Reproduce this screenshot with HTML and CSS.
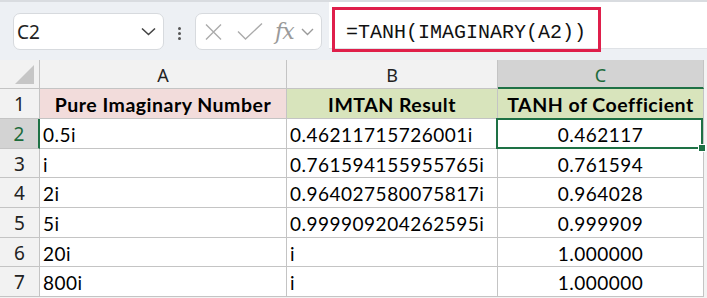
FILE: index.html
```html
<!DOCTYPE html>
<html lang="en">

<head>
  <meta charset="UTF-8">
  <title>TANH of Coefficient</title>
  <link rel="stylesheet" href="styles.css">
</head>

<body>
  <div class="toolbar">
    <div class="namebox">
      <span>C2</span>
      <svg width="15" height="9" viewBox="0 0 15 9"><path d="M1 1.5 L7.5 7.5 L14 1.5" fill="none" stroke="#444" stroke-width="1.6"/></svg>
    </div>
    <div class="grip"><i></i><i></i><i></i></div>
    <div class="fxbox">
      <svg class="ic-x" width="17" height="16" viewBox="0 0 17 16"><path d="M1 0.5 L16 15.5 M16 0.5 L1 15.5" fill="none" stroke="#ababab" stroke-width="1.4"/></svg>
      <svg class="ic-ok" width="26" height="17" viewBox="0 0 26 17"><path d="M1 8.5 L8.5 16 L25 0.5" fill="none" stroke="#ababab" stroke-width="1.4"/></svg>
      <span class="fx">fx</span>
      <svg width="13" height="8" viewBox="0 0 13 8"><path d="M1 1 L6.5 6.5 L12 1" fill="none" stroke="#9a9a9a" stroke-width="1.4"/></svg>
    </div>
    <div class="formula">
      <div class="formula-text">=TANH(IMAGINARY(A2))</div>
    </div>
  </div>

  <div class="sheet">
    <div class="corner"><svg width="20" height="20" viewBox="0 0 20 20"><path d="M19 0 L19 19 L0 19 Z" fill="#c6c6c6"/></svg></div>
    <div class="colhead">A</div>
    <div class="colhead">B</div>
    <div class="colhead active">C</div>

    <div class="rowhead">1</div>
    <div class="cell title pink">Pure Imaginary Number</div>
    <div class="cell title green">IMTAN Result</div>
    <div class="cell title green">TANH of Coefficient</div>

    <div class="rowhead active">2</div>
    <div class="cell">0.5i</div>
    <div class="cell">0.46211715726001i</div>
    <div class="cell num selected">0.462117<span class="sel"><span class="handle"></span></span></div>

    <div class="rowhead">3</div>
    <div class="cell">i</div>
    <div class="cell">0.761594155955765i</div>
    <div class="cell num">0.761594</div>

    <div class="rowhead">4</div>
    <div class="cell">2i</div>
    <div class="cell">0.964027580075817i</div>
    <div class="cell num">0.964028</div>

    <div class="rowhead">5</div>
    <div class="cell">5i</div>
    <div class="cell">0.999909204262595i</div>
    <div class="cell num">0.999909</div>

    <div class="rowhead">6</div>
    <div class="cell">20i</div>
    <div class="cell">i</div>
    <div class="cell num">1.000000</div>

    <div class="rowhead">7</div>
    <div class="cell">800i</div>
    <div class="cell">i</div>
    <div class="cell num">1.000000</div>
  </div>
</body>

</html>
```

FILE: styles.css
```css
body {
  margin: 0;
  width: 707px;
  height: 298px;
  overflow: hidden;
  background: #f3f3f3;
  font-family: "Noto Sans", sans-serif;
}

/* formula bar */
.toolbar {
  height: 58px;
  display: flex;
  align-items: flex-start;
  background: #edf0f4;
  border-top: 2px solid #d9dce0;
}

.namebox {
  box-sizing: border-box;
  width: 151px;
  height: 37px;
  margin: 11px 0 0 13px;
  padding: 0 7px 0 3px;
  display: flex;
  align-items: center;
  justify-content: space-between;
  background: #fff;
  border: 1px solid #d7dade;
  border-radius: 7px;
  font-size: 19px;
  color: #222;
}

.grip {
  margin: 25px 0 0 14px;
  display: flex;
  flex-direction: column;
  gap: 2px;
}

.grip i {
  width: 3px;
  height: 3px;
  border-radius: 50%;
  background: #555;
}

.fxbox {
  box-sizing: border-box;
  width: 127px;
  height: 37px;
  margin: 11px 0 0 14px;
  padding: 0 0 0 9px;
  display: flex;
  align-items: center;
  background: #fff;
  border: 1px solid #d7dade;
  border-radius: 7px;
}

.ic-ok {
  margin-left: 15px;
}

.fx {
  margin: 0 7px 0 12px;
  font-family: "DejaVu Serif", serif;
  font-style: italic;
  font-size: 22px;
  line-height: 22px;
  color: #9a9a9a;
  letter-spacing: -1px;
}

.formula {
  flex: 1;
  height: 47px;
  margin-left: 7px;
  padding: 5px 0 0 3px;
  box-sizing: border-box;
  background: #fff;
  border-bottom: 1px solid #dfe2e6;
}

.formula-text {
  box-sizing: border-box;
  width: 269px;
  height: 45px;
  padding: 6px 0 0 11px;
  border: 3px solid #df1f4b;
  font-family: "Liberation Mono", monospace;
  font-size: 20px;
  line-height: 33px;
  color: #111;
}

/* grid */
.sheet {
  display: grid;
  grid-template-columns: 40px 247px 211px 206px;
  grid-template-rows: 29px 30px 30px 29px 30px 30px 29px 30px;
  background: #fff;
  width: 704px;
}

.sheet > div {
  box-sizing: border-box;
  border-right: 1px solid #c4c4c4;
  border-bottom: 1px solid #c4c4c4;
  white-space: nowrap;
}

.corner {
  background: #f2f2f2;
  display: flex;
  align-items: flex-end;
  justify-content: flex-end;
  padding: 0 4px 3px 0;
}

.colhead {
  background: #f2f2f2;
  text-align: center;
  font-size: 18px;
  line-height: 30px;
  color: #222;
}

.colhead.active {
  background: #d3d3d3;
  color: #1c6b3b;
  border-bottom: 2px solid #1e7145 !important;
}

.rowhead {
  background: #f2f2f2;
  text-align: center;
  font-size: 19px;
  line-height: 30px;
  color: #222;
}

.rowhead.active {
  background: #d3d3d3;
  color: #1c6b3b;
  border-right: 2px solid #1e7145 !important;
}

.cell {
  padding: 2px 0 0 3px;
  font-family: Lato, "Liberation Sans", sans-serif;
  font-size: 19px;
  line-height: 27px;
  letter-spacing: 0.5px;
  color: #000;
}

.cell.title {
  font-size: 19.5px;
  font-weight: bold;
  text-align: center;
  padding-left: 0;
  letter-spacing: 0.5px;
}

.pink {
  background: #f2dcdb;
}

.green {
  background: #d8e4bc;
}

.cell.num {
  text-align: center;
  padding-left: 0;
}

.selected {
  position: relative;
}

.sel {
  position: absolute;
  left: -2px;
  right: 0;
  top: -1px;
  bottom: -1px;
  border: 2px solid #1e7145;
}

.handle {
  position: absolute;
  right: -5px;
  bottom: -5px;
  width: 6px;
  height: 6px;
  background: #1e7145;
  border: 1px solid #fff;
}
```
